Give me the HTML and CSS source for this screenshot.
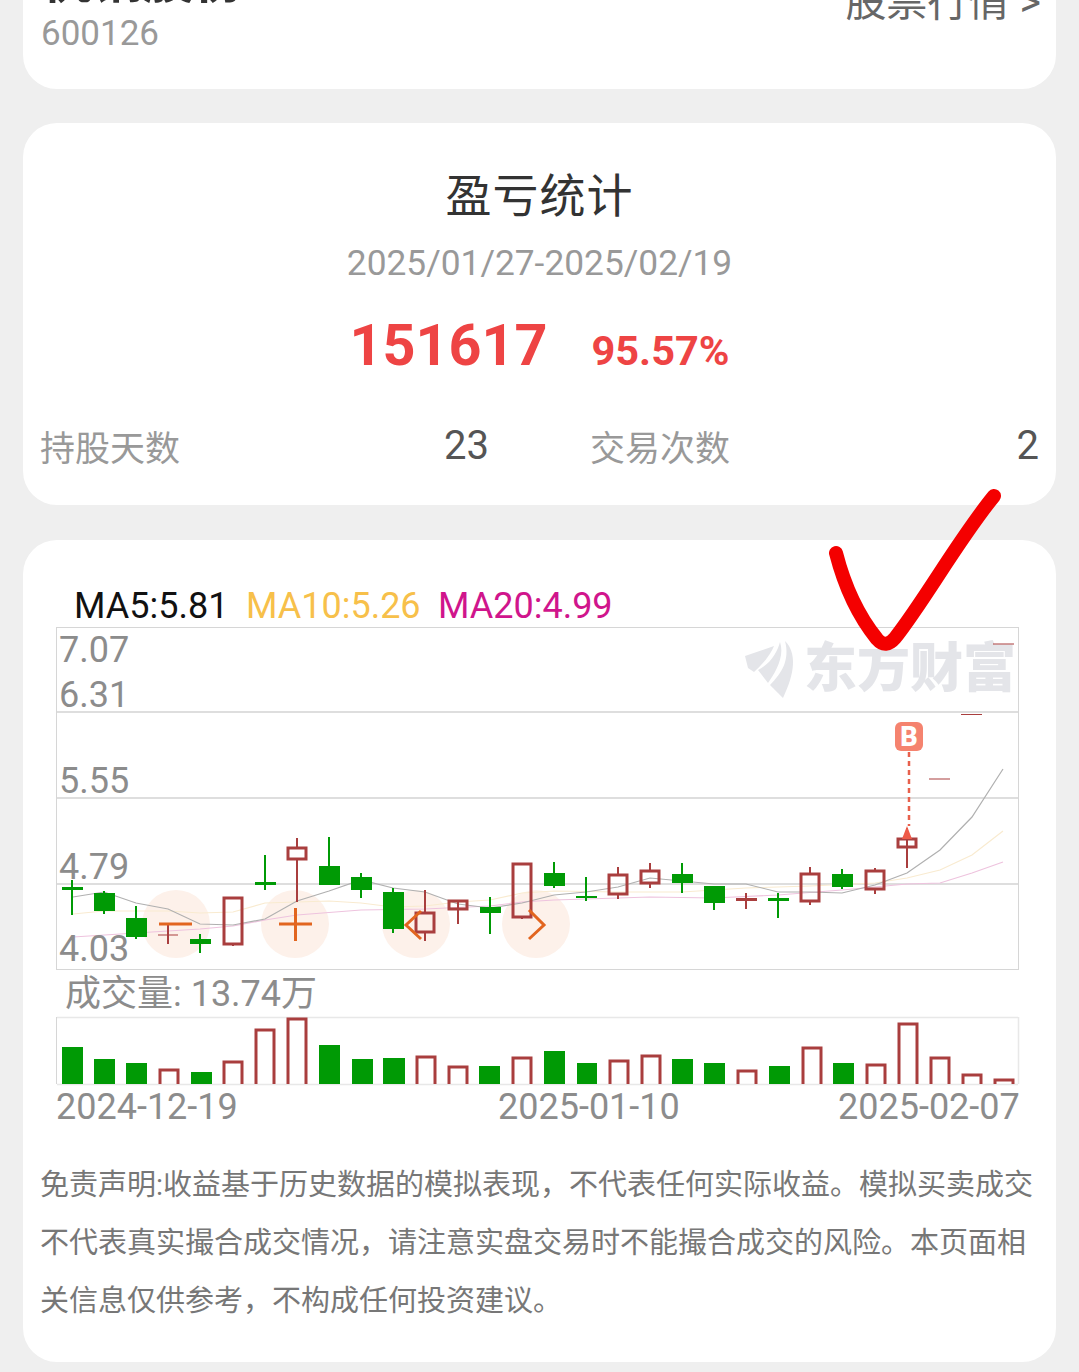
FILE: index.html
```html
<!DOCTYPE html>
<html>
<head>
    <meta charset="utf-8">
    <title>盈亏统计</title>
    <link rel="stylesheet" href="styles.css">
</head>
<body>
    <div class="page">
        <div class="card stock_card">
            <div>
                <div class="stock_name">杭钢股份</div>
                <div class="stock_code">600126</div>
            </div>
            <div class="stock_link">股票行情 &gt;</div>
        </div>

        <div class="card stat_card">
            <div class="stat_title">盈亏统计</div>
            <div class="stat_date">2025/01/27-2025/02/19</div>
            <div class="stat_profit">
                <span class="profit_value">151617</span>
                <span class="profit_rate">95.57%</span>
            </div>
            <div class="stat_row">
                <div class="stat_item"><span class="stat_label">持股天数</span><span class="stat_value">23</span></div>
                <div class="stat_item"><span class="stat_label">交易次数</span><span class="stat_value">2</span></div>
            </div>
        </div>

        <div class="card chart_card">
            <svg class="chart" viewBox="23 575 1033 560" width="1033" height="560">
                <!-- watermark -->
                <g class="mark_logo">
                    <path d="M745 656 L774 646 C771 654 763 664 754 672 L748 668 Z"/>
                    <path d="M780 642 C785 657 775 673 768 683 L758 670 C772 663 778 650 780 642 Z"/>
                    <path d="M785 641 C797 653 795 673 783 698 L770 685 C782 673 790 660 785 641 Z"/>
                </g>
                <text class="mark_text" x="804" y="687">东方财富</text>

                <!-- grid -->
                <rect class="grid" x="56.500" y="627.500" width="962" height="342"/>
                <path class="grid_in" d="M57 712H1018M57 798H1018M57 884H1018"/>
                <path class="grid_vol" d="M57 1017.500H1018M1018.500 1017V1084M57 1084.500H1018"/>
                <path class="grid" d="M56.500 1017V1084"/>

                <!-- highlights -->
                <circle class="spot" cx="176" cy="924" r="34"/>
                <circle class="spot" cx="295" cy="924" r="34"/>
                <circle class="spot" cx="416" cy="924" r="34"/>
                <circle class="spot" cx="536" cy="924" r="34"/>

                <!-- moving averages -->
                <polyline class="ma ma20" points="73,937 136,933 200,929 233,926 265,920 297,915 361,910 425,909 490,906 522,902 554,900 650,897 714,898 778,895 842,890 907,884 940,883 972,873 1003,862"/>
                <polyline class="ma ma10" points="73,914 104,911 168,911 200,913 233,912 265,903 297,902 329,901 361,903 393,907 425,906 458,902 490,900 522,893 554,891 618,892 682,892 746,888 810,886 875,883 907,878 940,870 972,855 1003,831"/>
                <polyline class="ma ma5" points="73,897 104,892 136,903 168,909 200,924 233,925 265,919 297,901 329,891 361,880 393,888 425,892 458,904 490,908 522,903 554,895 586,892 618,887 650,878 682,881 714,884 746,884 778,892 810,892 842,893 875,885 907,873 940,850 972,817 1003,769"/>

                <!-- candles -->
                <g class="down">
                    <path class="wick" d="M72 880V915M104 891V914M136 906V939M200 934V953M265 855V890M329 837V885M361 873V898M393 888V933M490 897V934M554 862V888M586 877V901M682 863V893M714 886V910M778 893V918M842 869V889"/>
                    <rect x="62" y="887" width="21" height="3"/>
                    <rect x="94" y="893" width="21" height="18"/>
                    <rect x="126" y="918" width="21" height="19"/>
                    <rect x="190" y="939" width="21" height="5"/>
                    <rect x="255" y="882" width="21" height="3"/>
                    <rect x="319" y="866" width="21" height="19"/>
                    <rect x="351" y="877" width="21" height="13"/>
                    <rect x="383" y="892" width="21" height="37"/>
                    <rect x="480" y="907" width="21" height="6"/>
                    <rect x="544" y="873" width="21" height="13"/>
                    <rect x="576" y="896" width="21" height="2"/>
                    <rect x="672" y="874" width="21" height="9"/>
                    <rect x="704" y="886" width="21" height="17"/>
                    <rect x="768" y="898" width="21" height="3"/>
                    <rect x="832" y="874" width="21" height="13"/>
                </g>
                <g class="up">
                    <path class="wick" d="M168 925V944M233 944V946M297 838V848M297 859V902M425 890V913M425 932V941M458 900V924M522 917V919M618 867V875M618 894V899M650 863V871M650 883V888M746 893V909M810 867V874M810 901V905M875 868V871M875 889V894M907 828V868"/>
                    <path class="wick_thin" d="M158 935H178M993 644H1014M961 714.500H982M929 779H950"/>
                    <rect class="red_fill" x="736" y="898" width="21" height="3"/>
                    <rect class="box" x="224" y="898" width="18" height="46"/>
                    <rect class="box" x="288" y="848" width="18" height="11"/>
                    <rect class="box" x="416" y="913" width="18" height="19"/>
                    <rect class="box" x="449" y="901" width="18" height="8"/>
                    <rect class="box" x="513" y="864" width="18" height="53"/>
                    <rect class="box" x="609" y="875" width="18" height="19"/>
                    <rect class="box" x="641" y="871" width="18" height="12"/>
                    <rect class="box" x="801" y="874" width="18" height="27"/>
                    <rect class="box" x="866" y="871" width="18" height="18"/>
                    <rect class="box" x="898" y="839" width="18" height="8"/>
                </g>

                <!-- trade marks -->
                <path class="trade" d="M159 924H192M279 924H312M295.500 908V941M421 911L406 925L421 939M529 910L544 925L529 939"/>

                <!-- volume -->
                <g class="down">
                    <rect x="62" y="1047" width="21" height="37"/>
                    <rect x="94" y="1059" width="21" height="25"/>
                    <rect x="126" y="1063" width="21" height="21"/>
                    <rect x="191" y="1072" width="21" height="12"/>
                    <rect x="319" y="1045" width="21" height="39"/>
                    <rect x="352" y="1059" width="21" height="25"/>
                    <rect x="383" y="1058" width="22" height="26"/>
                    <rect x="479" y="1066" width="21" height="18"/>
                    <rect x="544" y="1051" width="21" height="33"/>
                    <rect x="577" y="1063" width="20" height="21"/>
                    <rect x="672" y="1059" width="21" height="25"/>
                    <rect x="704" y="1063" width="21" height="21"/>
                    <rect x="769" y="1066" width="21" height="18"/>
                    <rect x="833" y="1063" width="21" height="21"/>
                </g>
                <g class="up">
                    <path class="box" d="M160 1084V1070H178V1084M224 1084V1062H242V1084M256 1084V1030H274V1084M288 1084V1019H306V1084M417 1084V1057H435V1084M449 1084V1067H467V1084M513 1084V1058H531V1084M610 1084V1061H628V1084M642 1084V1056H660V1084M738 1084V1071H756V1084M803 1084V1048H821V1084M867 1084V1065H885V1084M899 1084V1024H917V1084M931 1084V1058H949V1084M963 1084V1075H981V1084M995 1084V1080H1013V1084"/>
                </g>

                <!-- buy flag -->
                <path class="buy_line" d="M909 752V826"/>
                <path class="buy_arrow" d="M907 826L912 839H902Z"/>
                <rect class="buy_box" x="895" y="722" width="28" height="29" rx="6"/>
                <text class="buy_text" x="909" y="746">B</text>

                <!-- labels -->
                <text class="legend" x="74" y="618">MA5:5.81</text>
                <text class="legend leg10" x="246" y="618">MA10:5.26</text>
                <text class="legend leg20" x="438" y="618">MA20:4.99</text>
                <text class="axis" x="59" y="662">7.07</text>
                <text class="axis" x="59" y="707">6.31</text>
                <text class="axis" x="59" y="793">5.55</text>
                <text class="axis" x="59" y="879">4.79</text>
                <text class="axis" x="59" y="961">4.03</text>
                <text class="axis" x="65" y="1006">成交量: 13.74万</text>
                <text class="axis" x="56" y="1119">2024-12-19</text>
                <text class="axis" x="498" y="1119">2025-01-10</text>
                <text class="axis" x="838" y="1119">2025-02-07</text>
            </svg>
            <p class="notice">免责声明:收益基于历史数据的模拟表现，不代表任何实际收益。模拟买卖成交不代表真实撮合成交情况，请注意实盘交易时不能撮合成交的风险。本页面相关信息仅供参考，不构成任何投资建议。</p>
        </div>

        <!-- hand drawn tick over the page -->
        <svg class="tick" viewBox="0 0 1079 1372" width="1079" height="1372">
            <path d="M836 553 C845 588 860 618 877 639 C883 646 889 645 895 638 C925 600 958 540 994 496"/>
        </svg>
    </div>
</body>
</html>
```

FILE: styles.css
```css
html, body{
    margin: 0;
    height: 1372px;
    overflow: hidden;
    background-color: #efefef;
}
.page{
    position: relative;
    height: 1372px;
    overflow: hidden;
    padding: 0 23px;
    box-sizing: border-box;
    font-family: Roboto, "Noto Sans CJK SC", sans-serif;
}
.card{
    background-color: #fff;
    border-radius: 34px;
    margin-bottom: 35px;
    box-sizing: border-box;
}

/* stock header, cut by the top of the screen */
.stock_card{
    display: flex;
    justify-content: space-between;
    align-items: flex-start;
    height: 150px;
    margin-top: -61px;
    margin-bottom: 34px;
    padding: 0 16px 0 18px;
}
.stock_name{
    font-size: 51px;
    font-weight: 700;
    line-height: 60px;
    color: #333;
    margin-top: 12px;
}
.stock_code{
    font-size: 35px;
    line-height: 40px;
    color: #999;
    margin-top: 3px;
}
.stock_link{
    font-size: 41px;
    line-height: 48px;
    color: #666;
    margin-top: 39px;
    margin-right: -1px;
}

/* profit card */
.stat_card{
    height: 382px;
    padding: 46px 17px 0;
    text-align: center;
}
.stat_title{
    font-size: 46px;
    line-height: 54px;
    letter-spacing: 1px;
    color: #333;
}
.stat_date{
    font-size: 35.300px;
    line-height: 42px;
    color: #999;
    margin-top: 19px;
}
.stat_profit{
    display: flex;
    justify-content: center;
    align-items: baseline;
    gap: 44px;
    font-weight: 700;
    color: #ee4444;
    margin-top: 29px;
}
.profit_value{
    font-size: 57.500px;
    line-height: 66px;
}
.profit_rate{
    font-size: 41.500px;
}
.stat_row{
    display: grid;
    grid-template-columns: 448px 448px;
    column-gap: 102px;
    margin-top: 46px;
}
.stat_item{
    display: flex;
    justify-content: space-between;
    align-items: center;
}
.stat_label{
    font-size: 35px;
    line-height: 50px;
    color: #999;
}
.stat_value{
    font-size: 40px;
    color: #555;
    margin-top: -10px;
    margin-right: -1px;
}

/* chart card */
.chart_card{
    height: 822px;
    padding-top: 35px;
}
.chart{
    display: block;
}
.mark_logo path{
    fill: #e4e5e9;
}
.mark_text{
    font-family: "Noto Sans CJK SC", sans-serif;
    font-size: 53px;
    font-weight: 900;
    fill: #e4e5e9;
}
.grid{
    fill: none;
    stroke: #d6d6d6;
    stroke-width: 1;
}
.grid_in{
    fill: none;
    stroke: #d4d4d4;
    stroke-width: 1.500;
}
.grid_vol{
    fill: none;
    stroke: #e8e8e8;
    stroke-width: 1.500;
}
.spot{
    fill: #fdf1ea;
}
.down rect{
    fill: #009a05;
}
.down .wick{
    fill: none;
    stroke: #009a05;
    stroke-width: 2;
}
.up .wick{
    fill: none;
    stroke: #a93e3e;
    stroke-width: 2;
}
.up .wick_thin{
    fill: none;
    stroke: #a93e3e;
    stroke-width: 1.200;
}
.up .red_fill{
    fill: #a93e3e;
}
.up .box{
    fill: none;
    stroke: #a93e3e;
    stroke-width: 3;
}
.ma{
    fill: none;
    stroke-width: 1.200;
}
.ma5{
    stroke: #b0b0b0;
}
.ma10{
    stroke: #f9ebd0;
}
.ma20{
    stroke: #eec3de;
}
.trade{
    fill: none;
    stroke: #e2651f;
    stroke-width: 3;
}
.buy_line{
    fill: none;
    stroke: #e8604c;
    stroke-width: 2.500;
    stroke-dasharray: 5 4;
}
.buy_arrow{
    fill: #ee5a48;
}
.buy_box{
    fill: #f5836f;
}
.buy_text{
    font-size: 27px;
    font-weight: 900;
    text-anchor: middle;
    fill: #fff;
}
.legend{
    font-size: 36px;
    fill: #111;
}
.leg10{
    fill: #f7c04a;
}
.leg20{
    fill: #d0158c;
}
.axis{
    font-size: 36px;
    fill: #8c8c8c;
}
.notice{
    margin: 21px 17px 0;
    font-size: 29px;
    line-height: 58px;
    color: #777;
}

.tick{
    position: absolute;
    left: 0;
    top: 0;
    pointer-events: none;
}
.tick path{
    fill: none;
    stroke: #f40000;
    stroke-width: 14;
    stroke-linecap: round;
    stroke-linejoin: round;
}
```
